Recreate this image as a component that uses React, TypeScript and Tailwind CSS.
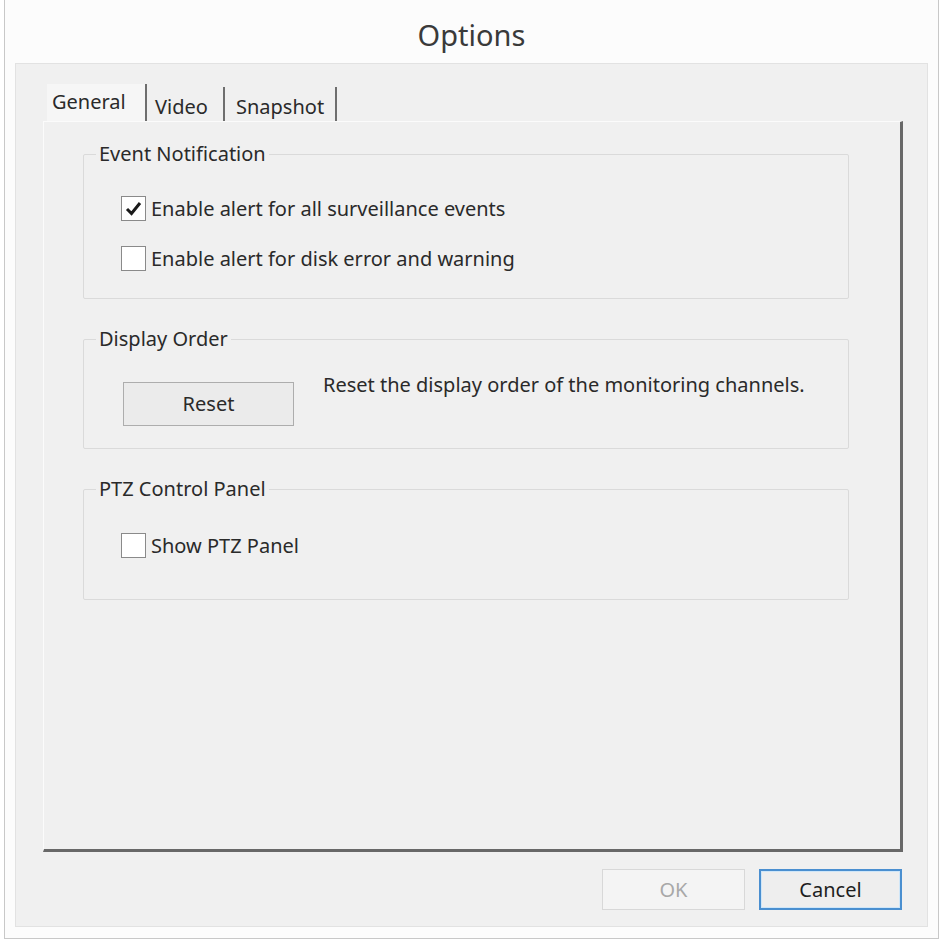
import React from 'react';

const font = { fontFamily: '"Noto Sans", "Open Sans", sans-serif' };

function CheckBox({ checked, label }: { checked?: boolean; label: string }) {
  return (
    <div className="flex items-center gap-[5px]">
      <div className="w-[25px] h-[25px] border border-[#8a8a8a] bg-white flex items-center justify-center">
        {checked && (
          <svg width="17" height="15" viewBox="0 0 17 15">
            <path d="M2 8 L6.5 12.5 L15 2" fill="none" stroke="#1a1a1a" strokeWidth="3" strokeLinejoin="miter" />
          </svg>
        )}
      </div>
      <span className="text-[20px] leading-[24px] text-[#2a2a2a]">{label}</span>
    </div>
  );
}

function Group({ title, height, children }: { title: string; height: string; children: React.ReactNode }) {
  return (
    <div className={`w-[766px] ${height} border border-[#dadada] rounded-[2px] flex flex-col`}>
      <span className="-mt-[13px] ml-[12px] px-[3px] w-fit bg-[#f0f0f0] text-[20px] leading-[24px] text-[#2a2a2a]">
        {title}
      </span>
      {children}
    </div>
  );
}

const tabs = [
  { label: 'General', cls: 'w-[100px] pl-[5px] h-[39px] bg-[#f6f6f6] leading-[36px]' },
  { label: 'Video', cls: 'w-[78px] pl-[8px] h-[36px] leading-[40px]' },
  { label: 'Snapshot', cls: 'w-[112px] pl-[11px] h-[36px] leading-[40px]' },
];

export default function App() {
  return (
    <div className="w-[942px] h-[943px] bg-white pl-[4px]" style={font}>
      <div className="w-[935px] h-[939px] border-x border-b border-[#c8c8c8] bg-[#fcfcfc] flex flex-col">
        <div className="h-[63px] pt-[17px] text-center text-[29px] leading-[36px] text-[#3a3a3a]">Options</div>
        <div className="ml-[10px] w-[913px] h-[864px] border border-[#e2e2e2] bg-[#f0f0f0] flex flex-col pt-[19px] pl-[27px]">
          <div className="h-[38px] flex items-end pl-[4px]">
            {tabs.map((t) => (
              <div
                key={t.label}
                className={`${t.cls} -mb-[2px] border-r-2 border-[#6e6e6e] text-[20px] text-[#2a2a2a] whitespace-nowrap`}
              >
                {t.label}
              </div>
            ))}
          </div>
          <div className="w-[860px] h-[731px] border-l border-t border-[#fbfbfb] border-r-[3px] border-b-[3px] border-r-[#686868] border-b-[#686868] bg-[#f0f0f0] flex flex-col pt-[32px] pl-[39px] gap-[40px]">
            <Group title="Event Notification" height="h-[145px]">
              <div className="flex flex-col gap-[25px] mt-[30px] ml-[37px]">
                <CheckBox checked label="Enable alert for all surveillance events" />
                <CheckBox label="Enable alert for disk error and warning" />
              </div>
            </Group>
            <Group title="Display Order" height="h-[110px]">
              <div className="flex items-start mt-[22px] ml-[39px]">
                <button className="mt-[9px] w-[171px] h-[44px] border border-[#adadad] bg-[#ebebeb] text-[20px] text-[#2a2a2a]">
                  Reset
                </button>
                <span className="ml-[29px] text-[20px] leading-[24px] text-[#2a2a2a]">
                  Reset the display order of the monitoring channels.
                </span>
              </div>
            </Group>
            <Group title="PTZ Control Panel" height="h-[111px]">
              <div className="mt-[32px] ml-[37px]">
                <CheckBox label="Show PTZ Panel" />
              </div>
            </Group>
          </div>
          <div className="flex justify-end gap-[14px] mt-[17px] pr-[25px]">
            <button className="w-[143px] h-[41px] border border-[#d8d8d8] bg-[#f4f4f4] text-[20px] text-[#a8a8a8]">OK</button>
            <button className="w-[143px] h-[41px] border-2 border-[#4a8fd0] bg-[#eeeeee] text-[20px] text-[#1e1e1e] shadow-[inset_0_0_0_1px_#cfe6f8]">
              Cancel
            </button>
          </div>
        </div>
      </div>
    </div>
  );
}
